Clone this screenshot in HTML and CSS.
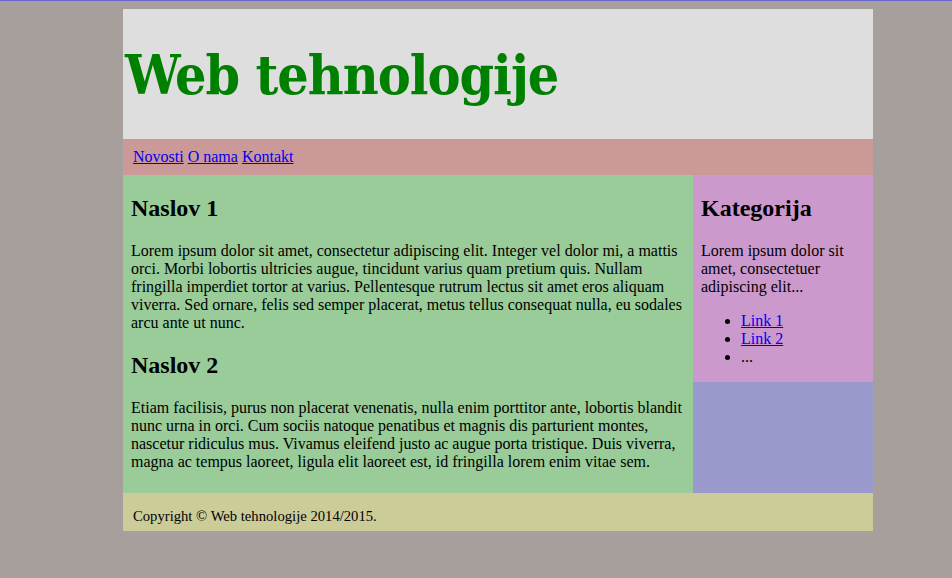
FILE: index.html
```html
<!DOCTYPE html>
<html lang="hr">
<head>
<meta charset="utf-8">
<title>Web tehnologije</title>
<link rel="stylesheet" href="styles.css">
</head>
<body>
<div class="page">
  <header class="header">
    <h1 class="title">Web tehnologije</h1>
  </header>
  <nav class="nav">
    <a href="#">Novosti</a> <a href="#">O nama</a> <a href="#">Kontakt</a>
  </nav>
  <div class="wrap">
    <main class="main">
      <h2>Naslov 1</h2>
      <p>Lorem ipsum dolor sit amet, consectetur adipiscing elit. Integer vel dolor mi, a mattis orci. Morbi lobortis ultricies augue, tincidunt varius quam pretium quis. Nullam fringilla imperdiet tortor at varius. Pellentesque rutrum lectus sit amet eros aliquam viverra. Sed ornare, felis sed semper placerat, metus tellus consequat nulla, eu sodales arcu ante ut nunc.</p>
      <h2>Naslov 2</h2>
      <p>Etiam facilisis, purus non placerat venenatis, nulla enim porttitor ante, lobortis blandit nunc urna in orci. Cum sociis natoque penatibus et magnis dis parturient montes, nascetur ridiculus mus. Vivamus eleifend justo ac augue porta tristique. Duis viverra, magna ac tempus laoreet, ligula elit laoreet est, id fringilla lorem enim vitae sem.</p>
    </main>
    <aside class="side">
      <h2>Kategorija</h2>
      <p>Lorem ipsum dolor sit amet, consectetuer adipiscing elit...</p>
      <ul>
        <li><a href="#">Link 1</a></li>
        <li><a href="#">Link 2</a></li>
        <li>...</li>
      </ul>
    </aside>
  </div>
  <footer class="footer">Copyright © Web tehnologije 2014/2015.</footer>
</div>
</body>
</html>
```
FILE: styles.css
```css
html, body {
  margin: 0;
  padding: 0;
}
body {
  background: #a69f9b;
  border-top: 1px solid #6666cc;
  font-family: "Liberation Serif", "Times New Roman", serif;
  font-size: 16px;
  line-height: 18px;
  color: #000;
}
a {
  color: #0000ee;
}
.page {
  width: 750px;
  margin: 8px 0 0 123px;
}
.header {
  background: #dedede;
  height: 130px;
  box-sizing: border-box;
  padding-top: 31px;
  padding-left: 2px;
}
.title {
  margin: 0;
  font-family: "DejaVu Serif Condensed", "DejaVu Serif", serif;
  font-weight: bold;
  font-size: 55px;
  line-height: 70px;
  color: #008000;
  letter-spacing: -1px;
}
.nav {
  background: #cc9999;
  padding: 9px 10px;
}
.wrap {
  display: flex;
  align-items: flex-start;
  background: #9999cc;
}
.main {
  width: 570px;
  box-sizing: border-box;
  padding: 0 8px 6px;
  background: #99cc99;
  align-self: stretch;
}
.side {
  width: 180px;
  box-sizing: border-box;
  padding: 0 8px;
  background: #cc99cc;
}
h2 {
  font-size: 24px;
  line-height: 27px;
  margin: 19.92px 0;
}
p {
  margin: 16px 0;
}
ul {
  margin: 16px 0;
  padding-left: 40px;
}
.footer {
  background: #cccc99;
  font-size: 14.67px;
  height: 38px;
  box-sizing: border-box;
  padding: 14px 10px 0;
}
```
